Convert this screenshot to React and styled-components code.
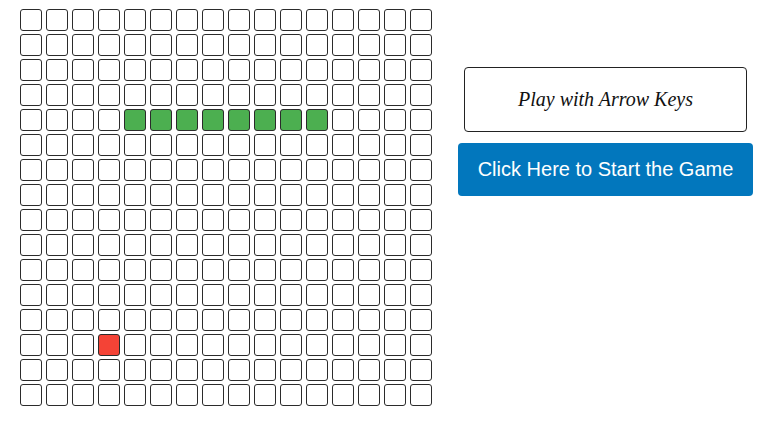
import React from 'react';
import styled, { createGlobalStyle } from 'styled-components';

const GlobalStyle = createGlobalStyle`
  body {
    margin: 0;
    background: #fff;
    font-family: "Liberation Sans", Arial, sans-serif;
  }
`;

const ROWS = 16;
const COLS = 16;

// snake on row 4, food on row 13
const snake = [4, 5, 6, 7, 8, 9, 10, 11].map((c) => `4-${c}`);
const food = '13-3';

const Page = styled.div`
  display: flex;
  align-items: flex-start;
  padding: 9px 0 0 20px;
`;

const Board = styled.div`
  display: grid;
  grid-template-columns: repeat(${COLS}, 22px);
  grid-auto-rows: 22px;
  column-gap: 4px;
  row-gap: 3px;
`;

const Cell = styled.div`
  box-sizing: border-box;
  width: 22px;
  height: 22px;
  border: 1px solid #2b2b2b;
  border-radius: 3px;
  background: ${(p) => (p.$kind === 'snake' ? '#4caf50' : p.$kind === 'food' ? '#f44336' : '#fff')};
`;

const Side = styled.div`
  display: flex;
  flex-direction: column;
  align-items: center;
  gap: 11px;
  width: 295px;
  margin: 58px 0 0 26px;
`;

const Hint = styled.div`
  box-sizing: border-box;
  width: 283px;
  height: 65px;
  display: flex;
  align-items: center;
  justify-content: center;
  border: 1px solid #222;
  border-radius: 4px;
  font-family: "Liberation Serif", "Times New Roman", serif;
  font-style: italic;
  font-size: 20px;
  color: #111;
`;

const StartButton = styled.button`
  width: 295px;
  height: 53px;
  border: none;
  border-radius: 4px;
  background: #0277bd;
  color: #fff;
  font-family: "Liberation Sans", Arial, sans-serif;
  font-size: 20px;
  cursor: pointer;
`;

export default function App() {
  const cells = [];
  for (let r = 0; r < ROWS; r++) {
    for (let c = 0; c < COLS; c++) {
      const key = `${r}-${c}`;
      const kind = snake.includes(key) ? 'snake' : key === food ? 'food' : 'empty';
      cells.push(<Cell key={key} $kind={kind} />);
    }
  }

  return (
    <>
      <GlobalStyle />
      <Page>
        <Board>{cells}</Board>
        <Side>
          <Hint>Play with Arrow Keys</Hint>
          <StartButton>Click Here to Start the Game</StartButton>
        </Side>
      </Page>
    </>
  );
}
